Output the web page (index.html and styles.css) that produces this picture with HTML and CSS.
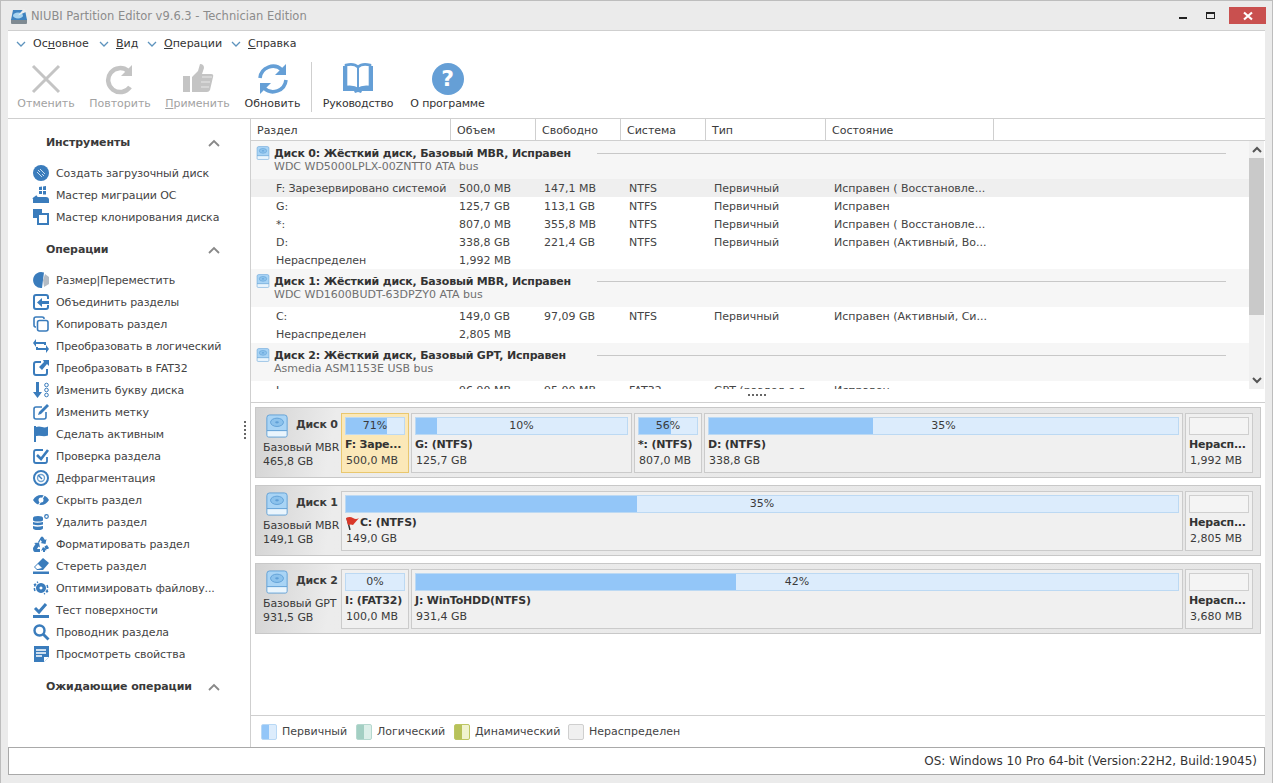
FILE: index.html
```html
<!DOCTYPE html>
<html lang="ru">
<head>
    <meta charset="UTF-8">
    <title>NIUBI Partition Editor</title>
    <link rel="stylesheet" href="styles.css">
</head>
<body>
<svg class="sprite" width="0" height="0">
    <symbol id="hdd" viewBox="0 0 26 26">
        <path d="M5 1h16q3 0 3 3v14H2V4q0-3 3-3z" fill="#a9d4f5" stroke="#5f9fd6"/>
        <ellipse cx="13" cy="9" rx="7" ry="4.5" fill="#8cc2ec" stroke="#5f9fd6"/>
        <ellipse cx="13" cy="9" rx="2" ry="1.2" fill="#5f9fd6"/>
        <path d="M2 18h22v5q0 2-2 2H4q-2 0-2-2z" fill="#eaf5fd" stroke="#5f9fd6"/>
    </symbol>
</svg>
<div class="window">
    <div class="titlebar">
        <svg class="app-icon" width="18" height="18" viewBox="0 0 18 18">
            <rect x="1" y="12" width="16" height="5" rx="1" fill="#7f8a92"/>
            <path d="M3 3h12l2 10H1z" fill="#3f83c0"/>
            <ellipse cx="8" cy="8.500" rx="5" ry="3" fill="#a8d4f0"/>
            <path d="M8 8.500l6-7 3 3z" fill="#eeeeee"/>
        </svg>
        <span class="title">NIUBI Partition Editor v9.6.3 - Technician Edition</span>
        <div class="win-btns">
            <span class="win-min"></span>
            <span class="win-max"></span>
            <span class="win-close">
                <svg width="10" height="10" viewBox="0 0 10 10"><path d="M1 1.5l8 7M9 1.5l-8 7" stroke="#fff" stroke-width="2.2"/></svg>
            </span>
        </div>
    </div>

    <div class="content">
        <div class="ribbon">
            <div class="menu">
                <span class="menu-item w1"><svg class="chev" width="10" height="6" viewBox="0 0 10 6"><path d="M1 1l4 4 4-4" fill="none" stroke="#5d93bd" stroke-width="1.3"/></svg>Ос<u>н</u>овное</span>
                <span class="menu-item w2"><svg class="chev" width="10" height="6" viewBox="0 0 10 6"><path d="M1 1l4 4 4-4" fill="none" stroke="#5d93bd" stroke-width="1.3"/></svg><u>В</u>ид</span>
                <span class="menu-item w3"><svg class="chev" width="10" height="6" viewBox="0 0 10 6"><path d="M1 1l4 4 4-4" fill="none" stroke="#5d93bd" stroke-width="1.3"/></svg><u>О</u>перации</span>
                <span class="menu-item"><svg class="chev" width="10" height="6" viewBox="0 0 10 6"><path d="M1 1l4 4 4-4" fill="none" stroke="#5d93bd" stroke-width="1.3"/></svg><u>С</u>правка</span>
            </div>
            <div class="toolbar">
                <div class="tool off t1">
                    <svg width="32" height="32" viewBox="0 0 32 32"><path d="M3 3l26 26M29 3L3 29" stroke="#c4c4c4" stroke-width="3"/></svg>
                    <span>Отменить</span>
                </div>
                <div class="tool off t2">
                    <svg width="32" height="32" viewBox="0 0 32 32"><path d="M24 8a12 12 0 1 0 2 16" fill="none" stroke="#c4c4c4" stroke-width="4.5"/><path d="M28 2v11H17z" fill="#c4c4c4"/></svg>
                    <span>Повторить</span>
                </div>
                <div class="tool off t3">
                    <svg width="32" height="32" viewBox="0 0 32 32"><rect x="1" y="13" width="7" height="16" fill="#c4c4c4"/><path d="M10 14l6-6 2-7q4 0 4 4l-2 6h9q3 0 2 3l-3 13q-1 2-3 2H10z" fill="#c4c4c4"/><path d="M20 14h10M19 19h9M19 24h8" stroke="#e8e8e8" stroke-width="1.2"/></svg>
                    <span><u>П</u>рименить</span>
                </div>
                <div class="tool t4">
                    <svg width="32" height="32" viewBox="0 0 32 32"><path d="M3 15a13 13 0 0 1 22-8" fill="none" stroke="#659fd6" stroke-width="3.6"/><path d="M29 1v11H18z" fill="#659fd6"/><path d="M29 17a13 13 0 0 1-22 8" fill="none" stroke="#659fd6" stroke-width="3.6"/><path d="M3 31V20h11z" fill="#659fd6"/></svg>
                    <span>Обновить</span>
                </div>
                <div class="tool-sep"></div>
                <div class="tool t5">
                    <svg width="32" height="32" viewBox="0 0 32 32"><path d="M1 3h3v22h10q2 0 2 2 0-2 2-2h10V3h3v25H20l-1 2-3-1-3 1-1-2H1z" fill="#659fd6"/><path d="M4 2q8-2 12 2 4-4 12-2v22q-8-1-12 2-4-3-12-2z" fill="#fff" stroke="#659fd6" stroke-width="2.6"/><path d="M16 4v22" stroke="#659fd6" stroke-width="2"/></svg>
                    <span>Руководство</span>
                </div>
                <div class="tool t6">
                    <span class="help-icon">?</span>
                    <span>О программе</span>
                </div>
            </div>
        </div>

        <div class="main">
            <aside class="sidebar">
                <div class="side-head"><span>Инструменты</span><svg width="12" height="8" viewBox="0 0 12 8"><path d="M1 7l5-5 5 5" fill="none" stroke="#888" stroke-width="1.8"/></svg></div>
                <ul class="side-list">
                    <li><svg width="16" height="16" viewBox="0 0 16 16"><circle cx="8" cy="8" r="8" fill="#3a7cbc"/><path d="M4 7l5 5M5 5l6 6M7 4l5 5" stroke="#d8e8f6" stroke-width=".9"/><circle cx="8" cy="8" r="1.200" fill="#3a7cbc"/></svg>Создать загрузочный диск</li>
                    <li><svg width="16" height="16" viewBox="0 0 16 16"><path d="M6 0l3-.4V3H6zM10 -.5L13-1v4h-3zM6 4h3v3H6zM10 4h3v3.500h-3z" fill="#3a7cbc"/><path d="M0 13q0-3 3-3h10q3 0 3 3v3H0z" fill="#3a7cbc"/><path d="M0 12l4-3" stroke="#3a7cbc" stroke-width="2"/></svg>Мастер миграции ОС</li>
                    <li><svg width="16" height="16" viewBox="0 0 16 16"><path d="M0 0h9v4H4v5H0z" fill="#3a7cbc"/><rect x="5" y="5" width="10" height="10" fill="#fff" stroke="#3a7cbc" stroke-width="2"/></svg>Мастер клонирования диска</li>
                </ul>
                <div class="side-head"><span>Операции</span><svg width="12" height="8" viewBox="0 0 12 8"><path d="M1 7l5-5 5 5" fill="none" stroke="#888" stroke-width="1.8"/></svg></div>
                <ul class="side-list">
                    <li><svg width="16" height="16" viewBox="0 0 16 16"><path d="M11 .6A8 8 0 1 0 9 16l1-8z" fill="#3a7cbc"/><path d="M12 2l4 3v7l-5 3-1-7z" fill="#b5bcc4"/></svg>Размер|Переместить</li>
                    <li><svg width="16" height="16" viewBox="0 0 16 16"><path d="M15 5V3q0-2-2-2H3Q1 1 1 3v10q0 2 2 2h10q2 0 2-2v-2" fill="none" stroke="#3a7cbc" stroke-width="2"/><path d="M16 7v3H9v3L4 8.500 9 4v3z" fill="#3a7cbc"/></svg>Объединить разделы</li>
                    <li><svg width="16" height="16" viewBox="0 0 16 16"><rect x="4.500" y="4.500" width="10.500" height="10.500" rx="2" fill="none" stroke="#3a7cbc" stroke-width="1.600"/><path d="M3 11H2.500Q1 11 1 9V3q0-2 2-2h6q2 0 2 1.500V3" fill="none" stroke="#3a7cbc" stroke-width="1.600"/></svg>Копировать раздел</li>
                    <li><svg width="16" height="16" viewBox="0 0 16 16"><path d="M3 5h9v2M13 11H4V9" fill="none" stroke="#3a7cbc" stroke-width="2"/><path d="M3 1v8L0 5zM13 7v8l3-4z" fill="#3a7cbc"/></svg>Преобразовать в логический</li>
                    <li><svg width="16" height="16" viewBox="0 0 16 16"><path d="M8 2H3Q1 2 1 4v9q0 2 2 2h9q2 0 2-2V9" fill="none" stroke="#3a7cbc" stroke-width="2"/><path d="M10 0h6v6l-2-2-5 6-3-3 5-5z" fill="#3a7cbc"/></svg>Преобразовать в FAT32</li>
                    <li><svg width="16" height="16" viewBox="0 0 16 16"><path d="M3 0h3v10h3l-4.500 6L0 10h3z" fill="#3a7cbc"/><circle cx="13.500" cy="3" r="1.800" fill="none" stroke="#3a7cbc"/><circle cx="13.500" cy="8" r="1.800" fill="none" stroke="#3a7cbc"/><circle cx="13.500" cy="13" r="1.800" fill="none" stroke="#3a7cbc"/></svg>Изменить букву диска</li>
                    <li><svg width="16" height="16" viewBox="0 0 16 16"><path d="M9 3H3Q1 3 1 5v8q0 2 2 2h8q2 0 2-2V8" fill="none" stroke="#3a7cbc" stroke-width="1.600"/><path d="M14 0l2 2-8 8-3 1 1-3z" fill="#3a7cbc"/></svg>Изменить метку</li>
                    <li><svg width="16" height="16" viewBox="0 0 16 16"><rect x="1" y="0" width="2" height="16" fill="#3a7cbc"/><path d="M3 1q3-1 6 0t6-.500v9q-3 1-6 .500T3 10z" fill="#3a7cbc"/></svg>Сделать активным</li>
                    <li><svg width="16" height="16" viewBox="0 0 16 16"><path d="M10 2H3Q1 2 1 4v9q0 2 2 2h9q2 0 2-2V9" fill="none" stroke="#3a7cbc" stroke-width="1.800"/><path d="M4 7l4 4 7-9" fill="none" stroke="#3a7cbc" stroke-width="2.600"/></svg>Проверка раздела</li>
                    <li><svg width="16" height="16" viewBox="0 0 16 16"><circle cx="8" cy="8" r="7" fill="none" stroke="#3a7cbc" stroke-width="2"/><circle cx="8" cy="8" r="3.500" fill="none" stroke="#6fa3d2" stroke-width="1.400"/><path d="M5 5l4 4" stroke="#3a7cbc" stroke-width="1.400"/></svg>Дефрагментация</li>
                    <li><svg width="16" height="16" viewBox="0 0 16 16"><path d="M0 8q3-5 8-5t8 5q-3 5-8 5T0 8z" fill="#3a7cbc"/><circle cx="8" cy="8" r="2.500" fill="#fff"/><path d="M5 14L12 2" stroke="#fff" stroke-width="1.200"/></svg>Скрыть раздел</li>
                    <li><svg width="16" height="16" viewBox="0 0 16 16"><path d="M0 4q0-2 5-2t5 2v2q0 1.500-5 1.500T0 6zM0 8q4 1.500 10 0v2.500q-5 1.500-10 0zM0 12q4 1.500 10 0v2q0 2-5 2t-5-2z" fill="#3a7cbc"/><circle cx="13.500" cy="2.500" r="1.800" fill="none" stroke="#3a7cbc" stroke-width="1.200"/></svg>Удалить раздел</li>
                    <li><svg width="16" height="16" viewBox="0 0 16 16"><path d="M5 6l3-5q1-1 2 0l2 3 1.500-1-1 5-5-1 1.500-1-1.500-2-1.500 3zM0 12l2.500-4L1 7l5-.500 1 5-1.500-1-1.500 2.500h3V16H2q-2 0-2-4zM10 16v-2l-2 1 2-4 4 3-2 .500v1.500zM12 13h3l1-1-2-3-2.500 1.500z" fill="#3a7cbc"/></svg>Форматировать раздел</li>
                    <li><svg width="16" height="16" viewBox="0 0 16 16"><path d="M10 0l6 5-6 7H4L1 9z" fill="#3a7cbc"/><path d="M5 11H4L2 9l3-3 4 4z" fill="#fff"/><rect x="0" y="13.500" width="16" height="2.500" fill="#3a7cbc"/></svg>Стереть раздел</li>
                    <li><svg width="16" height="16" viewBox="0 0 16 16"><path d="M8 3a5 5 0 1 0 .01 0zM8 6.500a1.500 1.500 0 1 1-.01 0z" fill="#3a7cbc" fill-rule="evenodd"/><path d="M2 11A7 7 0 0 1 5 2M14 5a7 7 0 0 1-3 9M1 5l1-1M14 12l1-1" fill="none" stroke="#3a7cbc" stroke-width="1.500" stroke-dasharray="3 1.500"/></svg>Оптимизировать файлову...</li>
                    <li><svg width="16" height="16" viewBox="0 0 16 16"><path d="M2 6l4 4 7-8" fill="none" stroke="#3a7cbc" stroke-width="3"/><rect x="0" y="13" width="16" height="3" fill="#3a7cbc"/></svg>Тест поверхности</li>
                    <li><svg width="16" height="16" viewBox="0 0 16 16"><circle cx="6.500" cy="6.500" r="5" fill="none" stroke="#3a7cbc" stroke-width="2.400"/><path d="M10.500 10.500l5 5" stroke="#3a7cbc" stroke-width="2.800"/></svg>Проводник раздела</li>
                    <li><svg width="16" height="16" viewBox="0 0 16 16"><path d="M1 0h15v11l-5 5H1z" fill="#3a7cbc"/><path d="M3 4h10M3 7h10M3 10h6" stroke="#fff" stroke-width="1.300"/><path d="M11 16v-5h5z" fill="#fff"/></svg>Просмотреть свойства</li>
                </ul>
                <div class="side-head"><span>Ожидающие операции</span><svg width="12" height="8" viewBox="0 0 12 8"><path d="M1 7l5-5 5 5" fill="none" stroke="#888" stroke-width="1.8"/></svg></div>
                <span class="splitter"></span>
            </aside>

            <section class="right">
                <div class="cols head-row">
                    <span>Раздел</span><span>Объем</span><span>Свободно</span><span>Система</span><span>Тип</span><span>Состояние</span>
                </div>

                <div class="list-wrap">
                    <div class="list">
                        <div class="disk-head">
                            <div class="disk-line"><svg width="14" height="14"><use href="#hdd"/></svg><b>Диск 0: Жёсткий диск, Базовый MBR, Исправен</b><i></i></div>
                            <div class="disk-sub">WDC WD5000LPLX-00ZNTT0 ATA bus</div>
                        </div>
                        <div class="cols row sel"><span>F: Зарезервировано системой</span><span>500,0 MB</span><span>147,1 MB</span><span>NTFS</span><span>Первичный</span><span>Исправен ( Восстановле...</span></div>
                        <div class="cols row"><span>G:</span><span>125,7 GB</span><span>113,1 GB</span><span>NTFS</span><span>Первичный</span><span>Исправен</span></div>
                        <div class="cols row"><span>*:</span><span>807,0 MB</span><span>355,8 MB</span><span>NTFS</span><span>Первичный</span><span>Исправен ( Восстановле...</span></div>
                        <div class="cols row"><span>D:</span><span>338,8 GB</span><span>221,4 GB</span><span>NTFS</span><span>Первичный</span><span>Исправен (Активный, Во...</span></div>
                        <div class="cols row"><span>Нераспределен</span><span>1,992 MB</span><span></span><span></span><span></span><span></span></div>
                        <div class="disk-head">
                            <div class="disk-line"><svg width="14" height="14"><use href="#hdd"/></svg><b>Диск 1: Жёсткий диск, Базовый MBR, Исправен</b><i></i></div>
                            <div class="disk-sub">WDC WD1600BUDT-63DPZY0 ATA bus</div>
                        </div>
                        <div class="cols row"><span>C:</span><span>149,0 GB</span><span>97,09 GB</span><span>NTFS</span><span>Первичный</span><span>Исправен (Активный, Си...</span></div>
                        <div class="cols row"><span>Нераспределен</span><span>2,805 MB</span><span></span><span></span><span></span><span></span></div>
                        <div class="disk-head">
                            <div class="disk-line"><svg width="14" height="14"><use href="#hdd"/></svg><b>Диск 2: Жёсткий диск, Базовый GPT, Исправен</b><i></i></div>
                            <div class="disk-sub">Asmedia ASM1153E USB bus</div>
                        </div>
                        <div class="cols row"><span>I:</span><span>96,90 MB</span><span>95,00 MB</span><span>FAT32</span><span>GPT (раздел с д...</span><span>Исправен</span></div>
                    </div>
                    <div class="scrollbar">
                        <span class="sb-btn"><svg width="10" height="7" viewBox="0 0 10 7"><path d="M1 6l4-4 4 4" fill="none" stroke="#555" stroke-width="2"/></svg></span>
                        <span class="sb-thumb"></span>
                        <span class="sb-btn"><svg width="10" height="7" viewBox="0 0 10 7"><path d="M1 1l4 4 4-4" fill="none" stroke="#555" stroke-width="2"/></svg></span>
                    </div>
                </div>
                <div class="grip"></div>

                <div class="map">
                    <div class="disk">
                        <div class="disk-info">
                            <div class="disk-name"><svg width="24" height="24"><use href="#hdd"/></svg><b>Диск 0</b></div>
                            <div>Базовый MBR</div>
                            <div>465,8 GB</div>
                        </div>
                        <div class="part small active">
                            <div class="bar"><span class="fill f71"></span><em>71%</em></div>
                            <b>F: Заре...</b>
                            <div>500,0 MB</div>
                        </div>
                        <div class="part g">
                            <div class="bar"><span class="fill f10"></span><em>10%</em></div>
                            <b>G: (NTFS)</b>
                            <div>125,7 GB</div>
                        </div>
                        <div class="part small">
                            <div class="bar"><span class="fill f56"></span><em>56%</em></div>
                            <b>*: (NTFS)</b>
                            <div>807,0 MB</div>
                        </div>
                        <div class="part grow">
                            <div class="bar"><span class="fill f35"></span><em>35%</em></div>
                            <b>D: (NTFS)</b>
                            <div>338,8 GB</div>
                        </div>
                        <div class="part small">
                            <div class="bar empty"></div>
                            <b>Нерасп...</b>
                            <div>1,992 MB</div>
                        </div>
                    </div>

                    <div class="disk">
                        <div class="disk-info">
                            <div class="disk-name"><svg width="24" height="24"><use href="#hdd"/></svg><b>Диск 1</b></div>
                            <div>Базовый MBR</div>
                            <div>149,1 GB</div>
                        </div>
                        <div class="part grow">
                            <div class="bar"><span class="fill f35"></span><em>35%</em></div>
                            <b class="with-flag"><svg width="15" height="14" viewBox="0 0 15 14"><path d="M5 14L2 2" stroke="#333" stroke-width="1.400"/><path d="M1 2q4-2 7 0t6 0L8 9q-2-1-5 0z" fill="#d9382a"/></svg>C: (NTFS)</b>
                            <div>149,0 GB</div>
                        </div>
                        <div class="part small">
                            <div class="bar empty"></div>
                            <b>Нерасп...</b>
                            <div>2,805 MB</div>
                        </div>
                    </div>

                    <div class="disk">
                        <div class="disk-info">
                            <div class="disk-name"><svg width="24" height="24"><use href="#hdd"/></svg><b>Диск 2</b></div>
                            <div>Базовый GPT</div>
                            <div>931,5 GB</div>
                        </div>
                        <div class="part small">
                            <div class="bar"><em>0%</em></div>
                            <b>I: (FAT32)</b>
                            <div>100,0 MB</div>
                        </div>
                        <div class="part grow">
                            <div class="bar"><span class="fill f42"></span><em>42%</em></div>
                            <b>J: WinToHDD(NTFS)</b>
                            <div>931,4 GB</div>
                        </div>
                        <div class="part small">
                            <div class="bar empty"></div>
                            <b>Нерасп...</b>
                            <div>3,680 MB</div>
                        </div>
                    </div>
                </div>

                <div class="legend">
                    <span class="leg"><i class="sw primary"></i>Первичный</span>
                    <span class="leg"><i class="sw logical"></i>Логический</span>
                    <span class="leg"><i class="sw dynamic"></i>Динамический</span>
                    <span class="leg"><i class="sw free"></i>Нераспределен</span>
                </div>
            </section>
        </div>

        <div class="status">OS: Windows 10 Pro 64-bit (Version:22H2, Build:19045)</div>
    </div>
</div>
</body>
</html>
```

FILE: styles.css
```css
* {
    margin: 0;
    padding: 0;
    box-sizing: border-box;
}

html, body {
    height: 100%;
    overflow: hidden;
}

body {
    font-family: "DejaVu Sans", Verdana, sans-serif;
    font-size: 11px;
    color: #3a3a3a;
    background-color: #ebebeb;
}

.sprite {
    position: absolute;
}

.window {
    height: 783px;
    display: flex;
    flex-direction: column;
    border: 1px solid #bdbdbd;
    border-bottom: none;
    background-color: #ebebeb;
}

/* title bar */
.titlebar {
    height: 29px;
    flex: none;
    display: flex;
    align-items: center;
    padding-left: 9px;
}

.app-icon {
    margin-right: 3px;
}

.title {
    font-size: 11.5px;
    color: #8c8c8c;
}

.win-btns {
    margin-left: auto;
    margin-right: 6px;
    display: flex;
    align-items: center;
}

.win-min {
    width: 8px;
    height: 2px;
    margin-top: 5px;
    background-color: #222;
    margin-right: 19px;
}

.win-max {
    width: 9px;
    height: 7px;
    border: 1px solid #222;
    border-top-width: 2px;
    margin-right: 14px;
}

.win-close {
    width: 37px;
    height: 17px;
    background-color: #c9504f;
    display: flex;
    align-items: center;
    justify-content: center;
}

.content {
    flex: none;
    height: 745px;
    margin: 0 7px;
    border-top: 1px solid #cfcfcf;
    background-color: #fff;
    display: flex;
    flex-direction: column;
}

/* ribbon */
.ribbon {
    height: 88px;
    flex: none;
    border-bottom: 1px solid #cfcfcf;
}

.menu {
    display: flex;
    padding: 0 0 0 8px;
    height: 25px;
    align-items: center;
}

.menu-item {
    display: flex;
    align-items: center;
    color: #333;
}

.menu-item u {
    text-decoration: underline;
}

.chev {
    margin-right: 7px;
}

.w1 { width: 83px; }
.w2 { width: 48px; }
.w3 { width: 84px; }

.toolbar {
    display: flex;
    height: 62px;
}

.tool {
    display: flex;
    flex-direction: column;
    align-items: center;
    justify-content: flex-start;
    padding-top: 7px;
    color: #333;
}

.tool span:last-child {
    margin-top: 2px;
}

.tool.off {
    color: #a2a2a2;
}

.t1 { width: 76px; }
.t2 { width: 72px; }
.t3 { width: 83px; }
.t4 { width: 67px; }
.t5 { width: 90px; letter-spacing: -0.25px; }
.t6 { width: 89px; letter-spacing: -0.15px; }

.tool-sep {
    width: 1px;
    height: 50px;
    margin: 6px 1px 0 5px;
    background-color: #cfcfcf;
}

.help-icon {
    width: 32px;
    height: 32px;
    flex: none;
    border-radius: 50%;
    background-color: #659fd6;
    color: #fff;
    font-size: 22px;
    font-weight: bold;
    line-height: 32px;
    text-align: center;
}

/* main split */
.main {
    flex: 1;
    display: flex;
    min-height: 0;
}

.sidebar {
    width: 243px;
    flex: none;
    border-right: 1px solid #cfcfcf;
    padding: 12px 0 0 25px;
    position: relative;
}

.side-head {
    display: flex;
    align-items: center;
    justify-content: space-between;
    height: 22px;
    padding: 1px 0 0 13px;
    width: 187px;
    font-size: 11px;
    font-weight: bold;
    letter-spacing: -0.1px;
    color: #3a3a3a;
}

.side-list {
    list-style: none;
    margin: 9px 0 10px;
    letter-spacing: -0.12px;
}

.side-list li {
    display: flex;
    align-items: center;
    height: 22px;
    white-space: nowrap;
    color: #444;
}

.side-list svg {
    margin-right: 7px;
    flex: none;
    overflow: visible;
}

.splitter {
    position: absolute;
    right: 4px;
    top: 302px;
    width: 2px;
    height: 18px;
    background-image: linear-gradient(#666 50%, transparent 50%);
    background-size: 2px 4px;
}

.right {
    flex: 1;
    min-width: 0;
    display: flex;
    flex-direction: column;
}

/* partition list */
.cols {
    display: grid;
    grid-template-columns: 200px 85px 85px 85px 120px 168px;
    white-space: nowrap;
}

.head-row {
    height: 22px;
    flex: none;
    border-bottom: 1px solid #cfcfcf;
    line-height: 23px;
}

.head-row span {
    border-right: 1px solid #cfcfcf;
    padding-left: 6px;
}

.list-wrap {
    height: 248px;
    flex: none;
    display: flex;
    overflow: hidden;
}

.list {
    flex: 1;
    min-width: 0;
    overflow: hidden;
}

.disk-head {
    height: 38px;
    padding: 5px 0 0 5px;
    background-color: #f6f6f6;
}

.disk-line {
    height: 14px;
    display: flex;
    align-items: center;
    font-size: 11px;
}

.disk-line svg {
    margin-right: 4px;
    flex: none;
}

.disk-line b {
    width: 323px;
    flex: none;
    white-space: nowrap;
    letter-spacing: -0.19px;
    color: #333;
}

.disk-line i {
    width: 629px;
    height: 1px;
    background-color: #c8c8c8;
}

.disk-sub {
    height: 14px;
    line-height: 14px;
    padding-left: 18px;
    color: #707070;
}

.row {
    height: 18px;
    line-height: 20px;
    color: #444;
}

.row span {
    padding-left: 8px;
}

.row span:first-child {
    padding-left: 25px;
    letter-spacing: -0.08px;
}

.sel {
    background-color: #efefef;
}

.scrollbar {
    width: 15px;
    flex: none;
    margin-right: 1px;
    display: flex;
    flex-direction: column;
    background-color: #f0f0f0;
}

.sb-btn {
    height: 17px;
    flex: none;
    display: flex;
    align-items: center;
    justify-content: center;
}

.sb-thumb {
    height: 157px;
    flex: none;
    background-color: #c9c9c9;
}

.sb-btn:last-child {
    margin-top: auto;
}

.grip {
    height: 14px;
    flex: none;
    border-bottom: 1px solid #cfcfcf;
    position: relative;
}

.grip::after {
    content: "";
    position: absolute;
    left: 497px;
    top: 5px;
    width: 18px;
    height: 2px;
    background-image: linear-gradient(90deg, #666 50%, transparent 50%);
    background-size: 4px 2px;
}

/* disk map */
.map {
    flex: 1;
    padding: 4px 4px 0 4px;
    border-bottom: 1px solid #cfcfcf;
}

.disk {
    height: 71px;
    margin-bottom: 7px;
    padding: 5px 7px 4px 0;
    display: flex;
    gap: 2px;
    border: 1px solid #c8c8c8;
    background: linear-gradient(100deg, #d3d3d3 0, #ececec 8%, #e6e6e6 100%);
}

.disk-info {
    width: 83px;
    flex: none;
    padding-left: 7px;
    line-height: 14px;
    white-space: nowrap;
    letter-spacing: -0.1px;
}

.disk-name {
    height: 23px;
    display: flex;
    align-items: center;
    gap: 7px;
    padding-left: 2px;
    margin-bottom: 5px;
}

.disk-name svg {
    margin-top: 3px;
    flex: none;
}

.disk-name b {
    font-size: 11px;
    letter-spacing: -0.2px;
}

.part {
    padding: 3px 3px 0 3px;
    border: 1px solid #cbcbcb;
    background-color: #f0f0f0;
    white-space: nowrap;
    overflow: hidden;
    line-height: 16px;
}

.part b {
    display: block;
    margin-top: 2px;
    letter-spacing: -0.2px;
    color: #333;
}

.part > div:last-child {
    padding-left: 1px;
}

.part.small {
    width: 68px;
    flex: none;
}

.part.g {
    width: 221px;
    flex: none;
}

.part.grow {
    flex: 1;
}

.part.active {
    background-color: #fbe8b8;
    border-color: #e9c76e;
}

.bar {
    height: 18px;
    position: relative;
    background-color: #dcecfc;
    border: 1px solid #bcd9f3;
    text-align: center;
    line-height: 16px;
}

.bar em {
    position: relative;
    font-style: normal;
}

.bar.empty {
    background-color: #f4f4f4;
    border-color: #cfcfcf;
}

.fill {
    position: absolute;
    left: 0;
    top: 0;
    bottom: 0;
    background-color: #93c6f8;
}

.f71 { width: 71%; }
.f10 { width: 10%; }
.f56 { width: 56%; }
.f35 { width: 35%; }
.f42 { width: 42%; }

.with-flag {
    display: flex !important;
    align-items: center;
}

/* legend */
.legend {
    height: 31px;
    flex: none;
    display: flex;
    align-items: center;
    padding-left: 10px;
    color: #444;
}

.leg {
    display: flex;
    align-items: center;
}

.leg:nth-child(1) { width: 95px; }
.leg:nth-child(2) { width: 98px; }
.leg:nth-child(3) { width: 114px; }

.sw {
    width: 16px;
    height: 16px;
    margin-right: 5px;
    border-radius: 2px;
    border: 1px solid;
}

.primary {
    border-color: #b8d8f5;
    background: linear-gradient(90deg, #93c6f8 50%, #dcecfc 50%);
}

.logical {
    border-color: #b5d8cf;
    background: linear-gradient(90deg, #a3cfc3 50%, #dcefe9 50%);
}

.dynamic {
    border-color: #bdc663;
    background: linear-gradient(90deg, #b7c25a 50%, #f0f3cf 50%);
}

.free {
    border-color: #cfcfcf;
    background-color: #f0f0f0;
}

/* status bar */
.status {
    height: 28px;
    flex: none;
    border: 1px solid #a9a9a9;
    font-size: 12px;
    text-align: right;
    line-height: 26px;
    padding-right: 7px;
    color: #333;
}
```
